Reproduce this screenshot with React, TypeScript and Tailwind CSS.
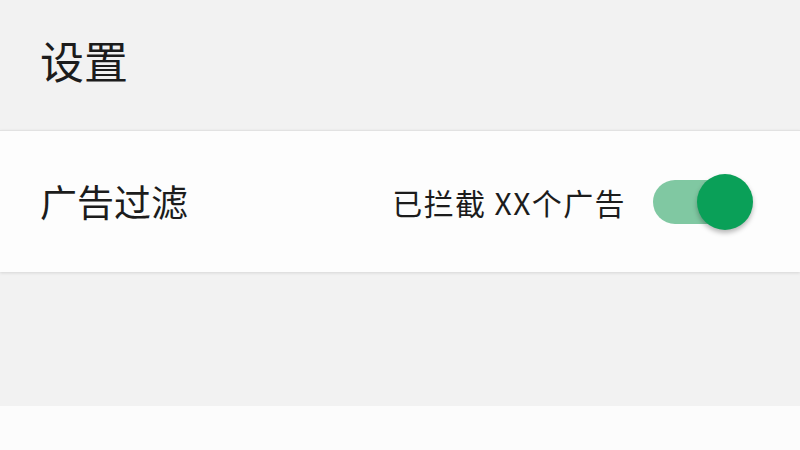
import React, { useState } from 'react';

const font = { fontFamily: '"Noto Sans CJK SC", "Noto Sans", sans-serif' };

const Toggle: React.FC<{ on: boolean; onChange: () => void }> = ({ on, onChange }) => (
    <button onClick={onChange} className="relative w-[100px] h-[56px] shrink-0">
        <span
            className={`absolute left-0 top-[6px] w-[88px] h-[44px] rounded-full ${on ? 'bg-[#80c8a2]' : 'bg-[#c4c4c4]'}`}
        />
        <span
            className={`absolute top-0 w-[56px] h-[56px] rounded-full shadow-[0_3px_5px_rgba(0,0,0,0.28)] ${on ? 'left-[44px] bg-[#0aa058]' : 'left-0 bg-[#fafafa]'}`}
        />
    </button>
);

const App: React.FC = () => {
    const [adFilter, setAdFilter] = useState(true);

    return (
        <div className="w-[800px] h-[450px] bg-[#f2f2f2] flex flex-col overflow-hidden text-[#1c1c1c]" style={font}>
            <div className="h-[130px] pl-[40px] pt-[34px]">
                <h1 className="text-[44px] leading-[52px]">设置</h1>
            </div>

            {/* Settings card */}
            <div className="h-[142px] bg-[#fdfdfd] border-t border-[#e2e2e2] shadow-[0_1px_3px_rgba(0,0,0,0.12)] flex items-center pl-[40px] pr-[47px]">
                <span className="text-[37px] leading-none">广告过滤</span>
                <div className="ml-auto flex items-center gap-[27px]">
                    <span className="text-[30px] leading-none tracking-[1.4px]">已拦截 XX个广告</span>
                    <Toggle on={adFilter} onChange={() => setAdFilter(!adFilter)} />
                </div>
            </div>

            <div className="flex-1" />
            <div className="h-[44px] bg-[#fcfcfc]" />
        </div>
    );
};

export default App;
